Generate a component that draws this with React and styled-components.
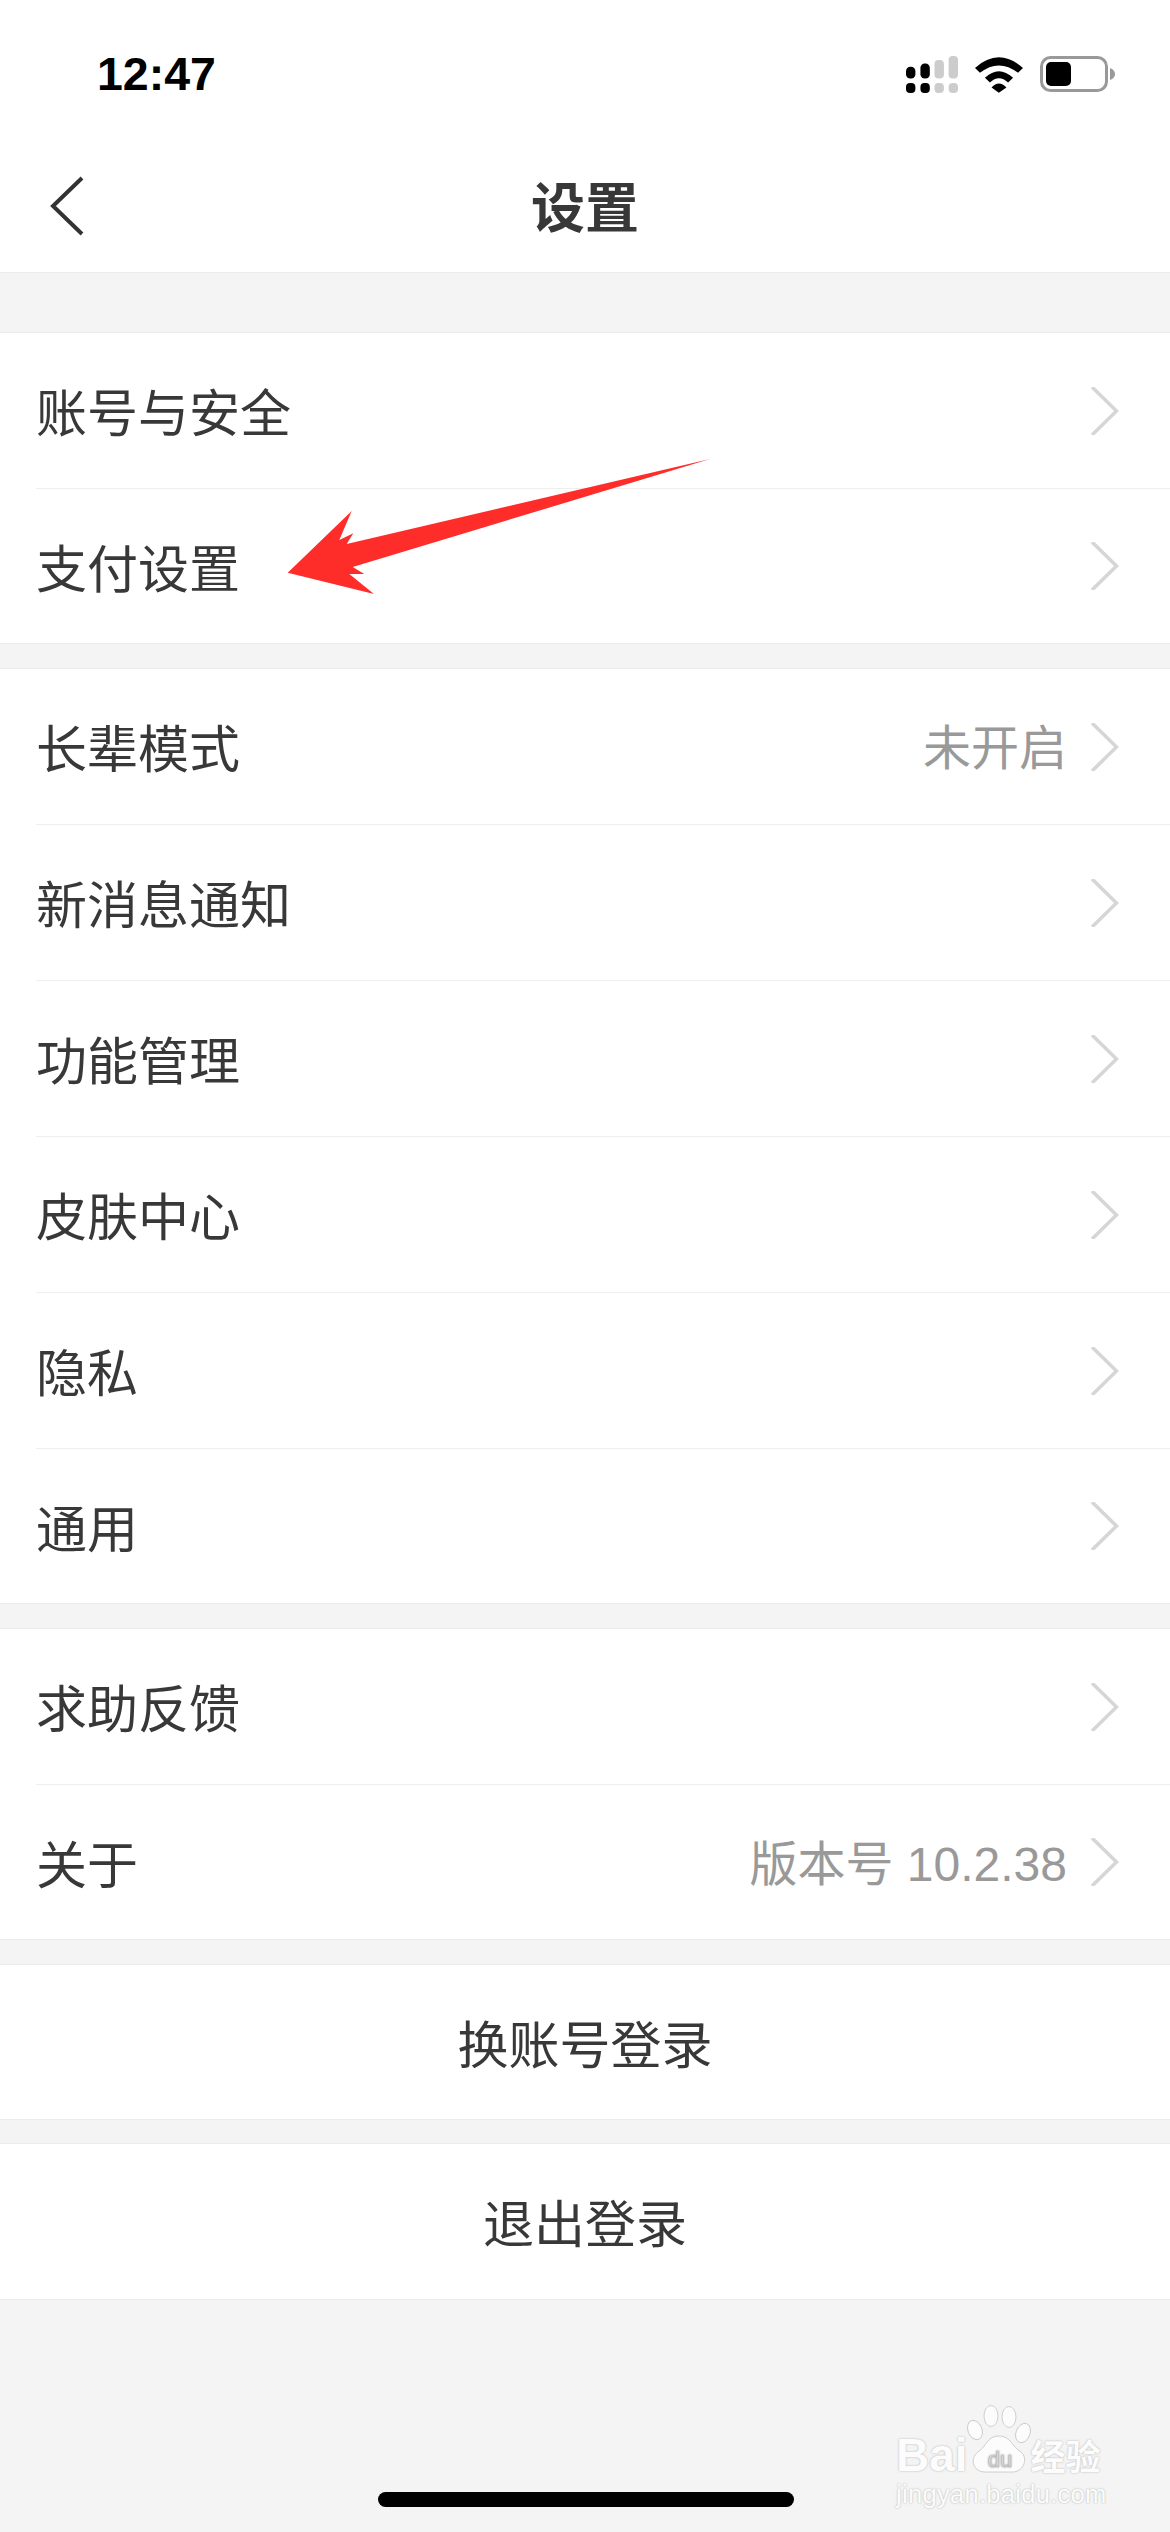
import React from "react";
import styled, { createGlobalStyle } from "styled-components";

const Global = createGlobalStyle`
  html, body { margin: 0; padding: 0; background: #f4f4f4; }
  body { font-family: "Noto Sans CJK SC", "Liberation Sans", sans-serif; }
`;

const Page = styled.div`
  position: relative;
  width: 1170px;
  height: 2532px;
  overflow: hidden;
  background: #f4f4f4;
  color: #383838;
`;

const Header = styled.header`
  background: #fff;
  height: 273px;
  border-bottom: 1px solid #ececec;
  box-sizing: border-box;
  display: flex;
  flex-direction: column;
`;

const StatusBar = styled.div`
  height: 140px;
  padding: 0 55px 0 97px;
  box-sizing: border-box;
  display: flex;
  align-items: center;
  justify-content: space-between;
`;

const Clock = styled.span`
  font-family: "Liberation Sans", sans-serif;
  font-weight: 700;
  font-size: 46.5px;
  line-height: 1;
  color: #000;
  margin-top: 9px;
`;

const StatusIcons = styled.div`
  display: flex;
  align-items: center;
  margin-top: 9px;
`;

const NavBar = styled.div`
  position: relative;
  flex: 1;
  display: flex;
  align-items: center;
  justify-content: center;
`;

const BackIcon = styled.svg`
  position: absolute;
  left: 48px;
  top: 36px;
`;

const Title = styled.h1`
  margin: -3px 0 0;
  font-size: 54px;
  font-weight: 700;
  line-height: 1;
  color: #383838;
`;

const Section = styled.section`
  margin-top: ${(p) => p.$gap}px;
  background: #fff;
  border-top: 1px solid #ececec;
  border-bottom: 1px solid #ececec;
`;

const Row = styled.div`
  height: ${(p) => p.$height}px;
  margin-left: 36px;
  padding-right: 51px;
  display: flex;
  align-items: center;
  box-sizing: border-box;
  & + & { border-top: 1px solid #eeeeee; }
`;

const Label = styled.span`
  flex: 1;
  font-size: 51px;
  line-height: 1;
  color: #383838;
`;

const Value = styled.span`
  font-size: 48px;
  line-height: 1;
  color: #999;
  margin: 5px 24px 0 0;
  font-family: "Liberation Sans", "Noto Sans CJK SC", sans-serif;
`;

const ActionButton = styled.div`
  height: ${(p) => p.$height}px;
  display: flex;
  align-items: center;
  justify-content: center;
  font-size: 51px;
  line-height: 1;
  color: #383838;
`;

const ArrowOverlay = styled.svg`
  position: absolute;
  left: 0;
  top: 0;
  pointer-events: none;
`;

const HomeIndicator = styled.div`
  position: absolute;
  left: 378px;
  top: 2492px;
  width: 416px;
  height: 15px;
  border-radius: 8px;
  background: #000;
`;

const Watermark = styled.div`
  position: absolute;
  left: 896px;
  top: 2405px;
  width: 216px;
  color: #fcfcfc;
  text-shadow: 0 0 2px #aaaaaa;
  font-family: "Liberation Sans", sans-serif;
`;

const BrandLine = styled.div`
  display: flex;
  align-items: flex-end;
  height: 68px;
`;

const BrandWord = styled.span`
  font-size: 46px;
  font-weight: 700;
  line-height: 36px;
`;

const BrandCjk = styled.span`
  font-family: "Noto Sans CJK SC", sans-serif;
  font-size: 35px;
  font-weight: 700;
  line-height: 36px;
`;

const Domain = styled.div`
  font-size: 25.5px;
  line-height: 28px;
  margin-top: 7px;
  letter-spacing: 0.3px;
  white-space: nowrap;
`;

const Chevron = () => (
  <svg width="28" height="48" viewBox="0 0 28 48" fill="none">
    <path d="M1 0 L25.5 24 L1 48" stroke="#d6d6d6" strokeWidth="3.6" />
  </svg>
);

const SignalIcon = () => (
  <svg width="52" height="37" viewBox="0 0 155 110" fill="#000">
    <rect x="0" y="32" width="28" height="35" rx="13" />
    <rect x="43" y="22" width="28" height="45" rx="13" />
    <rect x="0" y="80" width="28" height="30" rx="12" />
    <rect x="43" y="80" width="28" height="30" rx="12" />
    <g fill="#cccccc">
      <rect x="85" y="12" width="28" height="55" rx="12" />
      <rect x="127" y="0" width="28" height="67" rx="12" />
      <rect x="85" y="80" width="28" height="30" rx="12" />
      <rect x="127" y="80" width="28" height="30" rx="12" />
    </g>
  </svg>
);

const WifiIcon = () => (
  <svg width="48" height="36" viewBox="0 0 145 107" fill="#000" style={{ marginLeft: 17 }}>
    <path d="M0 32 Q72 -32 145 32 L130 47 Q72 2 15 47 Z" />
    <path d="M30 62 Q72 22 115 62 L100 76 Q72 50 45 76 Z" />
    <path d="M50 91 Q72 68 95 91 L72 107 Z" />
  </svg>
);

const BatteryIcon = () => (
  <svg width="75" height="37" viewBox="0 0 75 37" style={{ marginLeft: 17 }}>
    <rect x="1.5" y="1.5" width="65" height="33" rx="9" fill="#fff" stroke="#999" strokeWidth="3" />
    <rect x="6" y="6" width="25" height="24" rx="5" fill="#000" />
    <path d="M70 12 Q75 14 75 18 Q75 22 70 24 Z" fill="#999" />
  </svg>
);

const PawLogo = () => (
  <svg
    width="64"
    height="70"
    viewBox="0 0 64 70"
    fill="#fcfcfc"
    stroke="#c4c4c4"
    strokeWidth="0.8"
    style={{ margin: "0 0 -2px -1px" }}
  >
    <ellipse cx="8" cy="25" rx="7" ry="10" transform="rotate(-22 8 25)" />
    <ellipse cx="24" cy="11" rx="7" ry="10.5" />
    <ellipse cx="42" cy="12" rx="7" ry="10.5" />
    <ellipse cx="56" cy="28" rx="7" ry="10" transform="rotate(22 56 28)" />
    <path d="M32 31 C44 31 45 42 54 47 C62 54 56 68 44 67 L20 67 C6 68 2 54 11 47 C20 41 20 31 32 31 Z" />
    <text
      x="33"
      y="62"
      textAnchor="middle"
      fontSize="22"
      fontFamily="Liberation Sans, sans-serif"
      fill="#f4f4f4"
      stroke="#bdbdbd"
      strokeWidth="0.7"
    >
      du
    </text>
  </svg>
);

const groups = [
  {
    gap: 59,
    rows: [
      { label: "账号与安全", height: 155 },
      { label: "支付设置", height: 155 },
    ],
  },
  {
    gap: 24,
    rows: [
      { label: "长辈模式", value: "未开启", height: 155 },
      { label: "新消息通知", height: 156 },
      { label: "功能管理", height: 156 },
      { label: "皮肤中心", height: 156 },
      { label: "隐私", height: 156 },
      { label: "通用", height: 155 },
    ],
  },
  {
    gap: 24,
    rows: [
      { label: "求助反馈", height: 155 },
      { label: "关于", value: "版本号 10.2.38", height: 155 },
    ],
  },
];

const actions = [
  { label: "换账号登录", gap: 24, height: 154 },
  { label: "退出登录", gap: 23, height: 155 },
];

export default function App() {
  return (
    <Page>
      <Global />
      <Header>
        <StatusBar>
          <Clock>12:47</Clock>
          <StatusIcons>
            <SignalIcon />
            <WifiIcon />
            <BatteryIcon />
          </StatusIcons>
        </StatusBar>
        <NavBar>
          <BackIcon width="38" height="60" viewBox="0 0 38 60" fill="none">
            <path d="M34 2 L5 30 L34 58" stroke="#333" strokeWidth="4" />
          </BackIcon>
          <Title>设置</Title>
        </NavBar>
      </Header>

      {groups.map((group, i) => (
        <Section key={i} $gap={group.gap}>
          {group.rows.map((row) => (
            <Row key={row.label} $height={row.height}>
              <Label>{row.label}</Label>
              {row.value && <Value>{row.value}</Value>}
              <Chevron />
            </Row>
          ))}
        </Section>
      ))}

      {actions.map((action) => (
        <Section key={action.label} $gap={action.gap}>
          <ActionButton $height={action.height}>{action.label}</ActionButton>
        </Section>
      ))}

      <ArrowOverlay width="1170" height="700" viewBox="0 0 1170 700">
        <polygon
          fill="#ff2d2a"
          points="710,459 346.7,544 353.3,533.3 339.3,540 351.7,511 287.7,572.7 374,594 349.3,574 364.3,574 352.7,567"
        />
      </ArrowOverlay>

      <Watermark>
        <BrandLine>
          <BrandWord>Bai</BrandWord>
          <PawLogo />
          <BrandCjk>经验</BrandCjk>
        </BrandLine>
        <Domain>jingyan.baidu.com</Domain>
      </Watermark>

      <HomeIndicator />
    </Page>
  );
}
